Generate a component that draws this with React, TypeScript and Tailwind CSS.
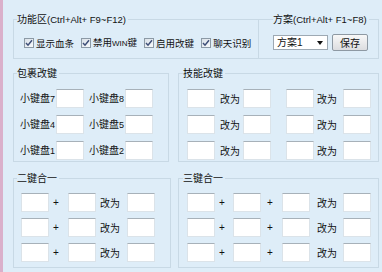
import React from "react";

const cjk = "font-['Noto_Sans_CJK_SC',sans-serif]";
const lat = "font-['Liberation_Sans','Noto_Sans_CJK_SC',sans-serif]";

function Box({ w = "w-[28px]" }: { w?: string }) {
  return (
    <div
      className={`${w} h-[19px] shrink-0 bg-white border border-[#dbe3e9] border-t-[#a7b1b9]`}
    />
  );
}

function Check({ label }: { label: React.ReactNode }) {
  return (
    <div className="flex items-center gap-[2px] shrink-0 whitespace-nowrap">
      <span className="w-[10px] h-[10px] shrink-0 border border-[#8c9aa6] bg-gradient-to-br from-[#d9e1e8] to-[#f8fafc] flex items-center justify-center">
        <svg width="8" height="8" viewBox="0 0 8 8">
          <path d="M1 4 L3 6.2 L7 1.2" stroke="#3e4f78" strokeWidth="1.5" fill="none" />
        </svg>
      </span>
      <span className={`${cjk} text-[9.5px] leading-[12px] text-[#111] whitespace-nowrap`}>{label}</span>
    </div>
  );
}

function Legend({ children, className = "" }: { children: React.ReactNode; className?: string }) {
  return (
    <legend className={`${cjk} text-[10px] leading-[12px] text-[#111] pr-[2px] whitespace-nowrap ${className}`}>
      {children}
    </legend>
  );
}

const fs = "border border-[#c8d9e5] min-w-0";
const txt = `${cjk} text-[10px] leading-[12px] text-[#111] whitespace-nowrap`;

function Gai({ w, pl }: { w: string; pl: string }) {
  return <span className={`${txt} ${w} ${pl} shrink-0`}>改为</span>;
}
function Plus({ w, pl }: { w: string; pl: string }) {
  return <span className={`${lat} text-[10px] leading-[12px] text-[#111] ${w} ${pl} shrink-0`}>+</span>;
}

export default function App() {
  return (
    <div className="w-[382px] h-[272px] flex bg-[#deedf8] overflow-hidden">
      <div className="w-[3px] shrink-0 bg-[#dab0cb]" />
      <div className="flex-1 flex flex-col pl-[10px] pr-[3px] pt-[13px]">
        {/* Row 1 */}
        <div className="flex">
          <fieldset className={`${fs} w-[245px] shrink-0 border-r-0 pl-[3px]`}>
            <Legend>
              功能区<span className={`${lat} text-[9.5px]`}>(Ctrl+Alt+ F9~F12)</span>
            </Legend>
            <div className="h-[32px] pt-[1px] flex items-center gap-[7px] pl-[7px]">
              <Check label="显示血条" />
              <Check label={<>禁用<span className={`${lat} text-[8px]`}>WIN</span>键</>} />
              <Check label="启用改键" />
              <Check label="聊天识别" />
            </div>
          </fieldset>
          <fieldset className={`${fs} flex-1 pl-[14px]`}>
            <Legend>
              方案<span className={`${lat} text-[9.5px]`}>(Ctrl+Alt+ F1~F8)</span>
            </Legend>
            <div className="h-[32px] pt-[1px] flex items-center gap-[4px]">
              <div className="w-[55px] h-[15px] bg-white border border-[#9da9b3] flex items-center justify-between pl-[3px] pr-[4px]">
                <span className={txt}>
                  方案<span className={lat}>1</span>
                </span>
                <svg width="6" height="4" viewBox="0 0 6 4">
                  <path d="M0 0 H6 L3 4 Z" fill="#111" />
                </svg>
              </div>
              <div className="w-[36px] h-[17px] rounded-[2px] border border-[#8e99a3] bg-gradient-to-b from-[#f8f8f8] to-[#dcdde0] flex items-center justify-center">
                <span className={txt}>保存</span>
              </div>
            </div>
          </fieldset>
        </div>

        {/* Row 2 */}
        <div className="flex mt-[8px]">
          <fieldset className={`${fs} w-[156px] shrink-0 pl-[3px] pb-[1px]`}>
            <Legend>包裹改键</Legend>
            <div className="pt-[10px] ml-[3px] flex flex-col gap-[7px]">
              {[
                ["7", "8"],
                ["4", "5"],
                ["1", "2"],
              ].map(([a, b]) => (
                <div key={a} className="flex items-center h-[19px]">
                  <span className={`${txt} w-[36px] shrink-0`}>
                    小键盘<span className={`${lat} text-[9px]`}>{a}</span>
                  </span>
                  <Box />
                  <span className={`${txt} w-[36px] ml-[5px] shrink-0`}>
                    小键盘<span className={`${lat} text-[9px]`}>{b}</span>
                  </span>
                  <Box />
                </div>
              ))}
            </div>
          </fieldset>
          <fieldset className={`${fs} flex-1 ml-[9px] pl-[4px] pb-[1px]`}>
            <Legend>技能改键</Legend>
            <div className="pt-[10px] ml-[4px] flex flex-col gap-[7px]">
              {[0, 1, 2].map((i) => (
                <div key={i} className="flex items-center h-[19px]">
                  <Box />
                  <Gai w="w-[28px]" pl="pl-[5px]" />
                  <Box />
                  <div className="w-[15px] shrink-0" />
                  <Box />
                  <Gai w="w-[29px]" pl="pl-[3px]" />
                  <Box />
                </div>
              ))}
            </div>
          </fieldset>
        </div>

        {/* Row 3 */}
        <div className="flex mt-[10px]">
          <fieldset className={`${fs} w-[158px] shrink-0 pl-[3px] pb-[5px]`}>
            <Legend>二键合一</Legend>
            <div className="pt-[9px] ml-[4px] flex flex-col gap-[6px]">
              {[0, 1, 2].map((i) => (
                <div key={i} className="flex items-center h-[19px]">
                  <Box />
                  <Plus w="w-[19px]" pl="pl-[4px]" />
                  <Box />
                  <Gai w="w-[31px]" pl="pl-[4px]" />
                  <Box />
                </div>
              ))}
            </div>
          </fieldset>
          <fieldset className={`${fs} flex-1 ml-[7px] pl-[4px] pb-[5px]`}>
            <Legend>三键合一</Legend>
            <div className="pt-[9px] ml-[4px] flex flex-col gap-[6px]">
              {[0, 1, 2].map((i) => (
                <div key={i} className="flex items-center h-[19px]">
                  <Box />
                  <Plus w="w-[18px]" pl="pl-[4px]" />
                  <Box />
                  <Plus w="w-[21px]" pl="pl-[6px]" />
                  <Box />
                  <Gai w="w-[33px]" pl="pl-[7px]" />
                  <Box />
                </div>
              ))}
            </div>
          </fieldset>
        </div>
      </div>
    </div>
  );
}
